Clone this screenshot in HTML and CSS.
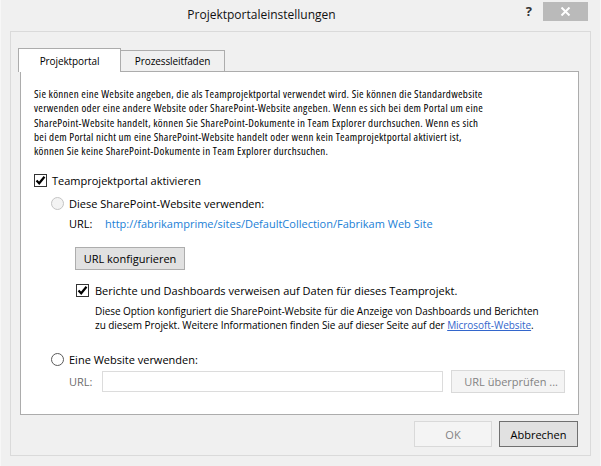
FILE: index.html
```html
<!DOCTYPE html>
<html lang="de">
<head>
    <meta charset="UTF-8">
    <title>Projektportaleinstellungen</title>
    <link rel="stylesheet" href="styles.css">
</head>
<body>
    <div class="window">
        <div class="titlebar">
            <div class="title">Projektportaleinstellungen</div>
            <div class="help">?</div>
            <div class="close">
                <svg width="11" height="9" viewBox="0 0 11 9"><path d="M1.5 0.5 L9.5 8.5 M9.5 0.5 L1.5 8.5" stroke="#fff" stroke-width="2"/></svg>
            </div>
        </div>

        <div class="frame">
            <div class="tabs">
                <div class="tab active">Projektportal</div>
                <div class="tab">Prozessleitfaden</div>
            </div>

            <div class="panel">
                <p class="intro">
                    Sie können eine Website angeben, die als Teamprojektportal verwendet wird. Sie können die Standardwebsite<br>
                    verwenden oder eine andere Website oder SharePoint-Website angeben. Wenn es sich bei dem Portal um eine<br>
                    SharePoint-Website handelt, können Sie SharePoint-Dokumente in Team Explorer durchsuchen. Wenn es sich<br>
                    bei dem Portal nicht um eine SharePoint-Website handelt oder wenn kein Teamprojektportal aktiviert ist,<br>
                    können Sie keine SharePoint-Dokumente in Team Explorer durchsuchen.
                </p>

                <div class="row enable">
                    <span class="box"><svg width="11" height="11" viewBox="0 0 11 11"><path d="M1.5 5.5 L4.2 8.3 L9.5 1.8" fill="none" stroke="#000" stroke-width="2.2"/></svg></span>
                    <span>Teamprojektportal aktivieren</span>
                </div>

                <div class="option">
                    <div class="row radio-row">
                        <span class="radio off"></span>
                        <span>Diese SharePoint-Website verwenden:</span>
                    </div>
                    <div class="row url-row">
                        <span class="url-label">URL:</span>
                        <a class="site" href="#">http://fabrikamprime/sites/DefaultCollection/Fabrikam Web Site</a>
                    </div>
                    <button class="btn config">URL konfigurieren</button>
                    <div class="row reports">
                        <span class="box"><svg width="11" height="11" viewBox="0 0 11 11"><path d="M1.5 5.5 L4.2 8.3 L9.5 1.8" fill="none" stroke="#000" stroke-width="2.2"/></svg></span>
                        <span>Berichte und Dashboards verweisen auf Daten für dieses Teamprojekt.</span>
                    </div>
                    <p class="desc">
                        Diese Option konfiguriert die SharePoint-Website für die Anzeige von Dashboards und Berichten<br>
                        zu diesem Projekt. Weitere Informationen finden Sie auf dieser Seite auf der <a href="#">Microsoft-Website</a>.
                    </p>

                    <div class="row radio-row other">
                        <span class="radio"></span>
                        <span>Eine Website verwenden:</span>
                    </div>
                    <div class="row url-row2">
                        <span class="url-label gray">URL:</span>
                        <input type="text" class="url-input">
                        <button class="btn disabled check-url">URL überprüfen ...</button>
                    </div>
                </div>
            </div>

            <div class="footer">
                <button class="btn disabled ok">OK</button>
                <button class="btn cancel">Abbrechen</button>
            </div>
        </div>
    </div>
</body>
</html>
```
FILE: styles.css
```css
body {
    margin: 0;
    background-color: #f0f0f0;
    font-family: "Open Sans", sans-serif;
    font-size: 11px;
    color: #000;
}

.window {
    width: 601px;
    height: 466px;
    box-sizing: border-box;
    border-left: 1px solid #f7f7f7;
    border-right: 1px solid #f7f7f7;
}

.titlebar {
    display: flex;
    align-items: flex-start;
    height: 31px;
}
.title {
    flex: 1;
    text-align: center;
    font-size: 12px;
    line-height: 16px;
    padding: 7px 0 0 4px;
    color: #111;
}
.help {
    font-weight: bold;
    font-size: 13px;
    line-height: 16px;
    padding-top: 3px;
    color: #333;
    width: 14px;
    margin-right: 11px;
    text-align: right;
}
.close {
    width: 45px;
    height: 19px;
    margin-top: 2px;
    margin-right: 12px;
    background-color: #bababa;
    display: flex;
    align-items: center;
    justify-content: center;
}

.frame {
    margin: 0 9px 0 9px;
    height: 425px;
    box-sizing: border-box;
    border: 1px solid #dadada;
    padding-top: 16px;
}

.tabs {
    display: flex;
    align-items: flex-end;
    height: 24px;
    margin-bottom: -1px;
    padding-left: 7px;
}
.tab {
    box-sizing: border-box;
    border: 1px solid #acacac;
    border-bottom: none;
    text-align: center;
    line-height: 18px;
    font-size: 10px;
    letter-spacing: -0.1px;
}
.tab.active {
    position: relative;
    z-index: 1;
    width: 103px;
    height: 24px;
    background-color: #fff;
    padding-top: 3px;
}
.tab:not(.active) {
    width: 105px;
    height: 21px;
    margin-left: -1px;
    margin-bottom: 1px;
    background-color: #f0f0f0;
    padding-top: 1px;
}

.panel {
    margin: 0 11px 0 9px;
    height: 344px;
    box-sizing: border-box;
    background-color: #fff;
    border: 1px solid #acacac;
    padding: 15px 0 0 13px;
}

.intro {
    margin: 0;
    line-height: 14.25px;
    font-stretch: 75%;
    letter-spacing: 0.3px;
    white-space: nowrap;
}

.row {
    display: flex;
    align-items: center;
    height: 16px;
    white-space: nowrap;
}

.box {
    width: 13px;
    height: 13px;
    box-sizing: border-box;
    border: 1px solid #333;
    background-color: #fff;
    display: flex;
    align-items: center;
    justify-content: center;
    margin-right: 5px;
}

.radio {
    width: 13px;
    height: 13px;
    box-sizing: border-box;
    border: 1px solid #5a5a5a;
    border-radius: 50%;
    background-color: #fff;
    margin-right: 5px;
}
.radio.off {
    border-color: #c4c4c4;
    background-color: #f3f3f3;
}

.enable {
    margin-top: 14px;
}

.option {
    padding-left: 17px;
}
.radio-row {
    margin-top: 7px;
}
.url-row {
    margin-top: 4px;
    padding-left: 18px;
}
.url-label {
    width: 36px;
}
.url-label.gray {
    color: #6d6d6d;
    width: 33px;
}
.site {
    color: #1a80d6;
    text-decoration: none;
}

.btn {
    font-family: "Open Sans", sans-serif;
    font-size: 11px;
    color: #000;
    background-color: #e1e1e1;
    border: 1px solid #adadad;
    padding: 0;
    box-sizing: border-box;
}
.btn.disabled {
    background-color: #f4f4f4;
    border-color: #d9d9d9;
    color: #838383;
}

.config {
    display: block;
    width: 110px;
    height: 23px;
    margin: 16px 0 0 24px;
}

.reports {
    margin: 12px 0 0 25px;
}
.reports .box {
    margin-right: 6px;
}

.desc {
    margin: 6px 0 0 44px;
    line-height: 14px;
    font-size: 10px;
    letter-spacing: -0.05px;
    white-space: nowrap;
}
.desc a {
    color: #3366cc;
}

.other {
    margin-top: 19px;
}

.url-row2 {
    margin-top: 3px;
    height: 23px;
    padding-left: 18px;
}
.url-input {
    width: 341px;
    height: 21px;
    box-sizing: border-box;
    border: 1px solid #dcdcdc;
    margin: 0;
    padding: 0;
}
.check-url {
    width: 114px;
    height: 23px;
    margin-left: 8px;
    text-align: right;
    padding-right: 6px;
}

.footer {
    display: flex;
    justify-content: flex-end;
    gap: 7px;
    padding: 6px 12px 0 0;
}
.footer .btn {
    height: 26px;
}
.ok {
    width: 78px;
}
.cancel {
    width: 79px;
    border-color: #707070;
}
```
